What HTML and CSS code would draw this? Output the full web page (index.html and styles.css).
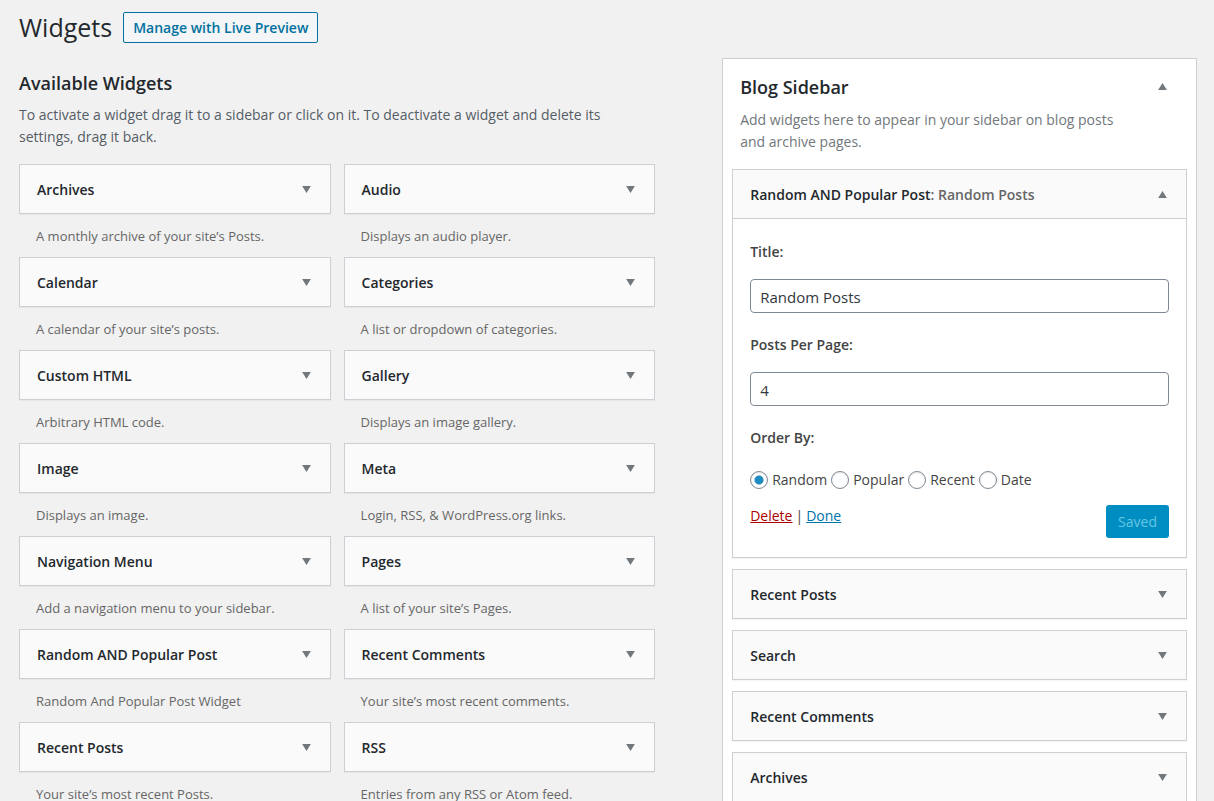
FILE: index.html
```html
<!DOCTYPE html>
<html lang="en">
<head>
<meta charset="utf-8">
<title>Widgets</title>
<meta name="viewport" content="width=device-width, initial-scale=1">
<link rel="stylesheet" href="styles.css">
</head>
<body>
<header class="page-header">
  <h1 class="page-title">Widgets</h1>
  <a class="page-action" href="#preview">Manage with Live Preview</a>
</header>
<main class="columns">
  <section class="available">
    <h2 class="section-title">Available Widgets</h2>
    <p class="intro">To activate a widget drag it to a sidebar or click on it. To deactivate a widget and delete its settings, drag it back.</p>
    <div class="widget-grid">
      <article class="widget"><button class="bar" type="button"><span>Archives</span><svg class="arrow" viewBox="0 0 10 8"><path d="M0 0h10L5 8z"/></svg></button><p class="description">A monthly archive of your site’s Posts.</p></article>
      <article class="widget"><button class="bar" type="button"><span>Audio</span><svg class="arrow" viewBox="0 0 10 8"><path d="M0 0h10L5 8z"/></svg></button><p class="description">Displays an audio player.</p></article>
      <article class="widget"><button class="bar" type="button"><span>Calendar</span><svg class="arrow" viewBox="0 0 10 8"><path d="M0 0h10L5 8z"/></svg></button><p class="description">A calendar of your site’s posts.</p></article>
      <article class="widget"><button class="bar" type="button"><span>Categories</span><svg class="arrow" viewBox="0 0 10 8"><path d="M0 0h10L5 8z"/></svg></button><p class="description">A list or dropdown of categories.</p></article>
      <article class="widget"><button class="bar" type="button"><span>Custom HTML</span><svg class="arrow" viewBox="0 0 10 8"><path d="M0 0h10L5 8z"/></svg></button><p class="description">Arbitrary HTML code.</p></article>
      <article class="widget"><button class="bar" type="button"><span>Gallery</span><svg class="arrow" viewBox="0 0 10 8"><path d="M0 0h10L5 8z"/></svg></button><p class="description">Displays an image gallery.</p></article>
      <article class="widget"><button class="bar" type="button"><span>Image</span><svg class="arrow" viewBox="0 0 10 8"><path d="M0 0h10L5 8z"/></svg></button><p class="description">Displays an image.</p></article>
      <article class="widget"><button class="bar" type="button"><span>Meta</span><svg class="arrow" viewBox="0 0 10 8"><path d="M0 0h10L5 8z"/></svg></button><p class="description">Login, RSS, &amp; WordPress.org links.</p></article>
      <article class="widget"><button class="bar" type="button"><span>Navigation Menu</span><svg class="arrow" viewBox="0 0 10 8"><path d="M0 0h10L5 8z"/></svg></button><p class="description">Add a navigation menu to your sidebar.</p></article>
      <article class="widget"><button class="bar" type="button"><span>Pages</span><svg class="arrow" viewBox="0 0 10 8"><path d="M0 0h10L5 8z"/></svg></button><p class="description">A list of your site’s Pages.</p></article>
      <article class="widget"><button class="bar" type="button"><span>Random AND Popular Post</span><svg class="arrow" viewBox="0 0 10 8"><path d="M0 0h10L5 8z"/></svg></button><p class="description">Random And Popular Post Widget</p></article>
      <article class="widget"><button class="bar" type="button"><span>Recent Comments</span><svg class="arrow" viewBox="0 0 10 8"><path d="M0 0h10L5 8z"/></svg></button><p class="description">Your site’s most recent comments.</p></article>
      <article class="widget"><button class="bar" type="button"><span>Recent Posts</span><svg class="arrow" viewBox="0 0 10 8"><path d="M0 0h10L5 8z"/></svg></button><p class="description">Your site’s most recent Posts.</p></article>
      <article class="widget"><button class="bar" type="button"><span>RSS</span><svg class="arrow" viewBox="0 0 10 8"><path d="M0 0h10L5 8z"/></svg></button><p class="description">Entries from any RSS or Atom feed.</p></article>
    </div>
  </section>
  <section class="sidebar">
    <div class="sidebar-head">
      <div class="sidebar-name">
        <h2 class="section-title">Blog Sidebar</h2>
        <button class="toggle" type="button" aria-label="Collapse Blog Sidebar"><svg class="arrow" viewBox="0 0 10 8"><path d="M0 8h10L5 0z"/></svg></button>
      </div>
      <p class="sidebar-text">Add widgets here to appear in your sidebar on blog posts and archive pages.</p>
    </div>
    <div class="sidebar-list">
      <article class="open-widget">
        <button class="bar bar-open" type="button"><span>Random AND Popular Post<span class="instance">: Random Posts</span></span><svg class="arrow" viewBox="0 0 10 8"><path d="M0 8h10L5 0z"/></svg></button>
        <form class="settings">
          <div class="field">
            <label class="field-label" for="widget-title">Title:</label>
            <input class="text-input" id="widget-title" type="text" value="Random Posts">
          </div>
          <div class="field">
            <label class="field-label" for="widget-count">Posts Per Page:</label>
            <input class="text-input" id="widget-count" type="text" value="4">
          </div>
          <fieldset class="order">
            <legend class="field-label">Order By:</legend>
            <div class="options">
              <label class="option"><input class="radio" type="radio" name="order" checked>Random</label>
              <label class="option"><input class="radio" type="radio" name="order">Popular</label>
              <label class="option"><input class="radio" type="radio" name="order">Recent</label>
              <label class="option"><input class="radio" type="radio" name="order">Date</label>
            </div>
          </fieldset>
          <div class="actions">
            <div class="links"><a class="delete" href="#delete">Delete</a><span>|</span><a class="done" href="#done">Done</a></div>
            <button class="save" type="submit" disabled>Saved</button>
          </div>
        </form>
      </article>
      <button class="bar" type="button"><span>Recent Posts</span><svg class="arrow" viewBox="0 0 10 8"><path d="M0 0h10L5 8z"/></svg></button>
      <button class="bar" type="button"><span>Search</span><svg class="arrow" viewBox="0 0 10 8"><path d="M0 0h10L5 8z"/></svg></button>
      <button class="bar" type="button"><span>Recent Comments</span><svg class="arrow" viewBox="0 0 10 8"><path d="M0 0h10L5 8z"/></svg></button>
      <button class="bar" type="button"><span>Archives</span><svg class="arrow" viewBox="0 0 10 8"><path d="M0 0h10L5 8z"/></svg></button>
    </div>
  </section>
</main>
</body>
</html>
```
FILE: styles.css
```css
* { box-sizing: border-box; }

body {
  margin: 0;
  height: 100vh;
  overflow: hidden;
  padding: 12px 17px 0 19px;
  background: #f1f1f1;
  color: #444;
  font: 14px/22px "Open Sans", "Noto Sans", sans-serif;
}

h1, h2, p { margin: 0; }
button, input { font: inherit; }

.page-header { display: flex; align-items: center; gap: 11px; }
.page-title { font-size: 25px; line-height: 31px; font-weight: 400; color: #23282d; }
.page-action {
  padding: 0 9px;
  border: 1px solid #0071a1;
  border-radius: 2px;
  background: #f3f5f6;
  color: #0071a1;
  line-height: 29px;
  font-weight: 600;
  text-decoration: none;
}

.columns {
  display: grid;
  grid-template-columns: 1.34fr 1fr;
  gap: 67px;
  align-items: start;
  margin-top: 15px;
}

.available { padding-top: 14px; }
.section-title { font-size: 18px; line-height: 22px; font-weight: 600; color: #23282d; }
.intro { max-width: 600px; margin-top: 10px; color: #555d66; }

.widget-grid {
  display: grid;
  grid-template-columns: 1fr 1fr;
  column-gap: 13px;
  margin-top: 16px;
}
.description { padding: 14px 17px 13px; font-size: 13px; line-height: 16px; color: #666; }

.bar {
  display: flex;
  align-items: center;
  justify-content: space-between;
  width: 100%;
  height: 50px;
  padding: 1px 19px 0 17px;
  border: 1px solid #ccd0d4;
  background: #fafafa;
  box-shadow: 0 1px 1px rgba(0, 0, 0, 0.04);
  color: #23282d;
  font-weight: 600;
  text-align: left;
}
.arrow { display: block; flex: none; width: 9px; height: 7px; fill: #72777c; }
.instance { color: #666; }

.sidebar {
  padding: 0 9px 12px;
  border: 1px solid #ccd0d4;
  background: #fff;
}
.sidebar-head { padding: 17px 8px 16px; }
.sidebar-name { display: flex; justify-content: space-between; align-items: start; }
.toggle { padding: 7px 12px 0 0; border: 0; background: none; }
.sidebar-text { max-width: 400px; margin-top: 11px; color: #72777c; }
.sidebar-list { display: flex; flex-direction: column; gap: 11px; }

.open-widget { border: 1px solid #ccd0d4; box-shadow: 0 1px 1px rgba(0, 0, 0, 0.04); }
.bar-open { height: 49px; border-width: 0 0 1px; box-shadow: none; }

.settings { padding: 22px 17px 19px; }
.field { margin-bottom: 21px; }
.field-label { display: block; padding: 0; font-weight: 600; }
.text-input {
  display: block;
  width: 100%;
  height: 34px;
  margin-top: 16px;
  padding: 1px 9px 0;
  border: 1px solid #7e8993;
  border-radius: 4px;
  background: #fff;
  color: #32373c;
  font-size: 15px;
}
.order { margin: 0; padding: 0; border: 0; }
.options { display: flex; flex-wrap: wrap; gap: 4px; margin-top: 20px; }
.option { display: flex; align-items: center; gap: 4px; }
.radio {
  appearance: none;
  width: 18px;
  height: 18px;
  margin: 0;
  border: 1px solid #7e8993;
  border-radius: 50%;
  background: #fff;
  box-shadow: inset 0 1px 2px rgba(0, 0, 0, 0.1);
}
.radio:checked { background: radial-gradient(circle, #1e8cbe 4px, #fff 5px); }
.actions { display: flex; justify-content: space-between; align-items: start; margin-top: 14px; }
.links { display: flex; gap: 3px; }
.delete { color: #a00; }
.done { color: #0073aa; }
.save {
  height: 33px;
  padding: 0 12px;
  border: 0;
  border-radius: 3px;
  background: #008ec2;
  color: #66c6e4;
}
```
